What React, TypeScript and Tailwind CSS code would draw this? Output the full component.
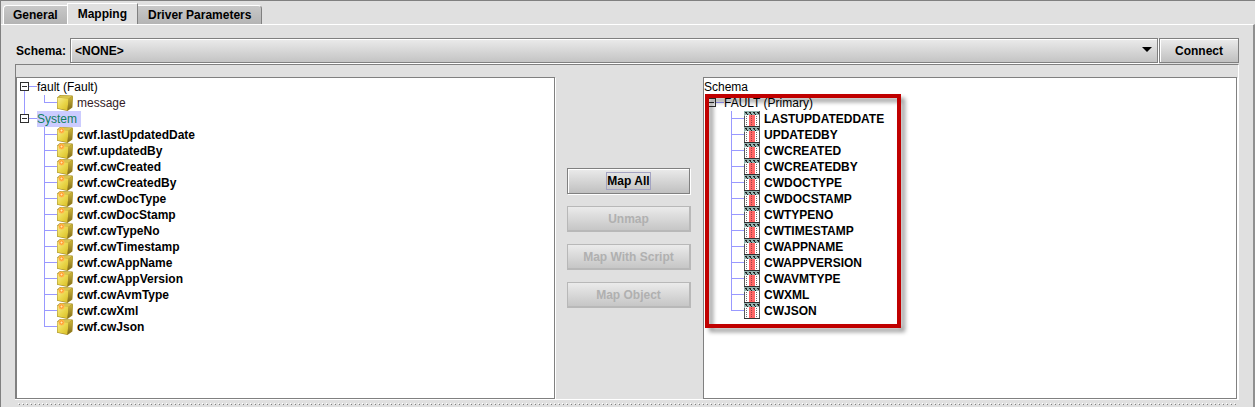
import React from "react";

const systemFields = [
  "cwf.lastUpdatedDate",
  "cwf.updatedBy",
  "cwf.cwCreated",
  "cwf.cwCreatedBy",
  "cwf.cwDocType",
  "cwf.cwDocStamp",
  "cwf.cwTypeNo",
  "cwf.cwTimestamp",
  "cwf.cwAppName",
  "cwf.cwAppVersion",
  "cwf.cwAvmType",
  "cwf.cwXml",
  "cwf.cwJson",
];

const columns = [
  "LASTUPDATEDDATE",
  "UPDATEDBY",
  "CWCREATED",
  "CWCREATEDBY",
  "CWDOCTYPE",
  "CWDOCSTAMP",
  "CWTYPENO",
  "CWTIMESTAMP",
  "CWAPPNAME",
  "CWAPPVERSION",
  "CWAVMTYPE",
  "CWXML",
  "CWJSON",
];

function CubeIcon({ marked }: { marked?: boolean }) {
  return (
    <svg width="16" height="16" viewBox="0 0 16 16" className="shrink-0" aria-hidden="true">
      <defs>
        <linearGradient id="cubeFront" x1="0" y1="0" x2="1" y2="1">
          <stop offset="0" stopColor="#f8ec90" />
          <stop offset="0.5" stopColor="#ead74c" />
          <stop offset="1" stopColor="#d8bc24" />
        </linearGradient>
        <linearGradient id="cubeSide" x1="0" y1="0" x2="0" y2="1">
          <stop offset="0" stopColor="#cdb63c" />
          <stop offset="1" stopColor="#806b18" />
        </linearGradient>
      </defs>
      <path d="M0 2.5 L3 0 L15.5 0.4 L16 2 L15.4 12.5 L10.5 16 L0 13.8Z" fill="#a8902c" />
      <path d="M0.8 2.5 L3.8 0.6 L15 1.1 L11.8 3.4Z" fill="#d8c44c" />
      <path d="M0.4 2.8 L11.6 3.6 L10.4 15.2 L0.6 13.2Z" fill="url(#cubeFront)" />
      <path d="M11.6 3.6 L15.6 1.5 L15 12.2 L10.4 15.4Z" fill="url(#cubeSide)" />
      {marked && (
        <g>
          <circle cx="4.5" cy="3.5" r="3" fill="#ffb84d" />
          <circle cx="4.5" cy="3.5" r="1.5" fill="#ffe9b0" stroke="#ff9420" />
        </g>
      )}
    </svg>
  );
}

function ColumnIcon() {
  return (
    <svg width="16" height="16" viewBox="0 0 16 16" className="shrink-0" shapeRendering="crispEdges" aria-hidden="true">
      <rect width="16" height="16" fill="#585858" />
      <rect x="0" y="0" width="15" height="5" fill="#93b3af" />
      <path d="M1 1h2v1h-2zM5 1h2v1h-2zM9 1h2v1h-2zM13 1h2v1h-2zM2 2h1v1h-1zM6 2h1v1h-1zM10 2h1v1h-1zM14 2h1v1h-1zM3 3h1v1h-1zM7 3h1v1h-1zM11 3h1v1h-1z" fill="#202020" />
      <rect x="1" y="4" width="4" height="11" fill="#fff" />
      <rect x="5" y="4" width="6" height="11" fill="#ff6666" />
      <rect x="11" y="4" width="4" height="11" fill="#fff" />
      <path d="M2.5 5v10M12.5 5v10" stroke="#707070" strokeDasharray="1 1" />
      <path d="M7.5 5v10" stroke="#a04444" strokeDasharray="1 1" />
      <path d="M0 15h16v1h-16z" fill="#303030" />
    </svg>
  );
}

function Toggle({ up, down }: { up?: boolean; down?: boolean }) {
  return (
    <button type="button" aria-label="Collapse" className="h-4 w-5 shrink-0">
      <svg width="20" height="16" viewBox="0 0 20 16" shapeRendering="crispEdges">
        {up && <path d="M7.5 0v4" stroke="#9999ff" />}
        {down && <path d="M7.5 12v4" stroke="#9999ff" />}
        <path d="M12 7.5h8" stroke="#9999ff" />
        <rect x="3.5" y="3.5" width="8" height="8" fill="#fff" stroke="#303030" />
        <path d="M5 7.5h5" stroke="#303030" />
      </svg>
    </button>
  );
}

function Branch({ last, through }: { last?: boolean; through?: boolean }) {
  return (
    <svg width="40" height="16" viewBox="0 0 40 16" className="shrink-0" shapeRendering="crispEdges" aria-hidden="true">
      {through && <path d="M7.5 0v16" stroke="#9999ff" />}
      <path d={last ? "M27.5 0v8" : "M27.5 0v16"} stroke="#9999ff" />
      <path d="M27 7.5h13" stroke="#9999ff" />
    </svg>
  );
}

function MapButton({ label, disabled }: { label: string; disabled?: boolean }) {
  return (
    <button
      type="button"
      disabled={disabled}
      className={
        disabled
          ? "flex h-6.5 items-center justify-center border border-r-2 border-b-2 border-[#b8b8b8] bg-linear-to-b from-[#ebebeb] to-[#c6c6c6] text-[#b0b0b0]"
          : "mr-px flex h-6.5 items-center justify-center border border-[#808080] bg-linear-to-b from-[#ebebeb] to-[#c0c0c0] shadow-[inset_1px_1px_0_#fff,1px_1px_0_#fff]"
      }
    >
      <span className={disabled ? "" : "border border-[#a3a3c2]"}>{label}</span>
    </button>
  );
}

const panel = "min-w-0 border border-[#808080] bg-white pt-px shadow-[1px_1px_0_#fff]";

export default function App() {
  return (
    <div className="flex min-h-screen flex-col border-t border-l border-[#808080] bg-[#e0e0e0] font-['Liberation_Sans',Arial,sans-serif] text-[12px] leading-4 font-bold text-black">
      <div role="tablist" className="flex items-end pt-0.5 pl-0.5">
        <button role="tab" aria-selected="false" type="button" className="h-[19px] rounded-tl-sm border-t border-l border-white bg-linear-to-b from-[#c8c8c8] to-[#b4b4b4] px-[9px]">
          General
        </button>
        <button role="tab" aria-selected="true" type="button" className="h-[21px] border-t border-r border-l border-t-white border-r-[#808080] border-l-white px-2.5">
          Mapping
        </button>
        <button role="tab" aria-selected="false" type="button" className="h-[19px] rounded-tr-sm border-t border-r border-t-white border-r-[#808080] bg-linear-to-b from-[#c8c8c8] to-[#b4b4b4] px-2.5">
          Driver Parameters
        </button>
      </div>

      <div className="flex flex-1 flex-col border-t border-r-2 border-t-white border-r-[#909090] pt-[13px] pr-3.5 pl-3.5">
        <div className="flex h-6.5 items-stretch gap-px pb-px">
          <label htmlFor="schema" className="flex w-13.5 items-center pl-px">
            Schema:
          </label>
          <div className="relative flex min-w-0 flex-1">
            <select
              id="schema"
              className="w-full appearance-none border border-[#808080] bg-linear-to-b from-[#ebebeb] to-[#c4c4c4] px-1 shadow-[inset_1px_1px_0_#fff,1px_1px_0_#fff]"
            >
              <option>&lt;NONE&gt;</option>
            </select>
            <svg width="10" height="5" viewBox="0 0 10 5" className="pointer-events-none absolute top-[9px] right-1.5" aria-hidden="true">
              <path d="M0 0h10L5 5z" fill="#000" />
            </svg>
          </div>
          <button
            type="button"
            className="w-20 border border-[#808080] bg-linear-to-b from-[#ebebeb] to-[#c0c0c0] shadow-[inset_1px_1px_0_#fff]"
          >
            Connect
          </button>
        </div>

        <div className="flex flex-1 border-t border-r border-l border-t-[#808080] border-r-white border-l-[#808080] pt-3 pr-px">
          <section className={`flex-539 ${panel}`}>
            <ul className="font-bold">
              <li className="flex font-normal">
                <Toggle down />
                fault (Fault)
              </li>
              <li className="flex font-normal text-[#331a26]">
                <Branch through last />
                <CubeIcon />
                <span className="pl-1">message</span>
              </li>
              <li className="flex font-normal">
                <Toggle up />
                <span className="bg-[#ccccff] pr-1 text-[#117f60]">System</span>
              </li>
              {systemFields.map((name, i) => (
                <li key={name} className="flex">
                  <Branch last={i === systemFields.length - 1} />
                  <CubeIcon marked />
                  <span className="pl-1">{name}</span>
                </li>
              ))}
            </ul>
          </section>

          <div className="flex w-37 shrink-0 flex-col justify-center gap-3 px-3">
            <MapButton label="Map All" />
            <MapButton label="Unmap" disabled />
            <MapButton label="Map With Script" disabled />
            <MapButton label="Map Object" disabled />
          </div>

          <section className={`flex-534 ${panel}`}>
            <div className="font-normal">Schema</div>
            <div className="relative">
              <ul>
                <li className="flex font-normal">
                  <Toggle />
                  FAULT (Primary)
                </li>
                {columns.map((name, i) => (
                  <li key={name} className="flex">
                    <Branch last={i === columns.length - 1} />
                    <ColumnIcon />
                    <span className="pl-1">{name}</span>
                  </li>
                ))}
              </ul>
              <div className="pointer-events-none absolute -top-px -bottom-[9px] left-px w-49 border-4 border-[#c00000] drop-shadow-[4px_4px_2px_rgba(0,0,0,0.4)]" />
            </div>
          </section>
        </div>

        <div className="h-2 border-t border-white px-0.5 pt-[3px]">
          <div className="h-px bg-[repeating-linear-gradient(90deg,transparent_0_1px,#fff_1px_2px,transparent_2px_4px)]" />
          <div className="h-px bg-[repeating-linear-gradient(90deg,transparent_0_2px,#808080_2px_3px,transparent_3px_4px)]" />
        </div>
      </div>
    </div>
  );
}
